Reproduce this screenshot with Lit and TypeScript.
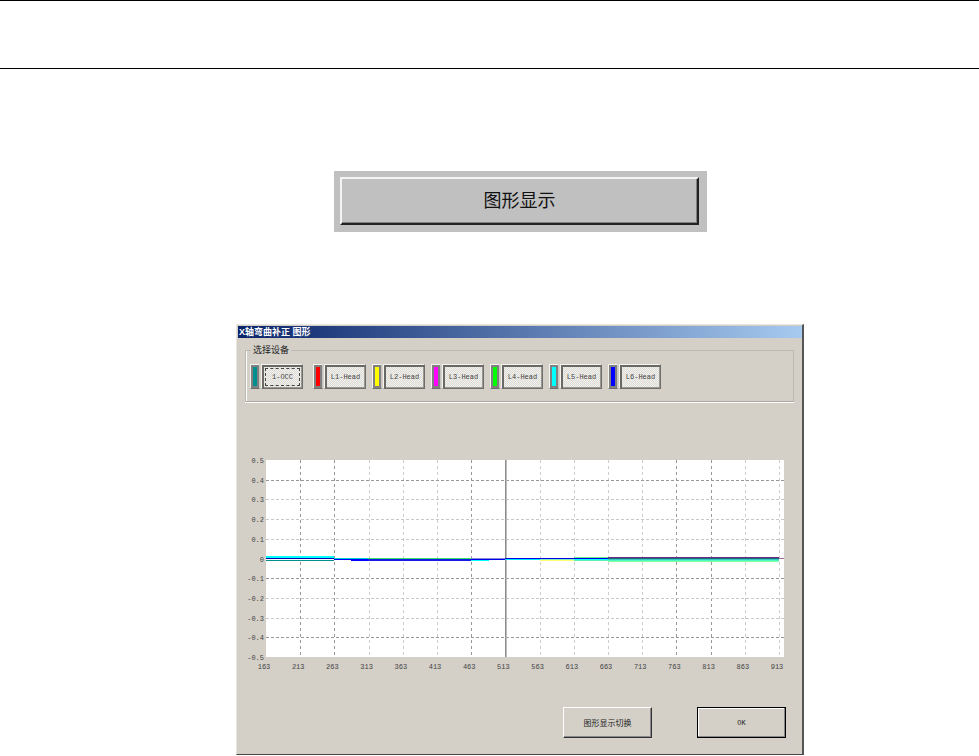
import { LitElement, html, css, svg } from "lit";
import { customElement } from "lit/decorators.js";

const SX = (i: number) => 266 + i * 34.2;
const YV = [0.5, 0.4, 0.3, 0.2, 0.1, 0, -0.1, -0.2, -0.3, -0.4, -0.5];
const XT = Array.from({ length: 16 }, (_, i) => 163 + i * 50);
const DARK_X = [1, 2, 6, 12, 13];
const DARK_Y = [1, 6, 9];
const DEVICES = [
  ["#008f8f", "1-OCC"], ["#ff0000", "L1-Head"], ["#ffff00", "L2-Head"], ["#ff00ff", "L3-Head"],
  ["#00ff00", "L4-Head"], ["#00ffff", "L5-Head"], ["#0000ff", "L6-Head"],
];
// x0, x1, y, colour, height
const SEGS: [number, number, number, string, number][] = [
  [266, 334, 556, "#00ffff", 2], [266, 334, 558, "#0000b0", 1], [266, 334, 560, "#008f8f", 1],
  [334, 368, 558, "#00d0d0", 1], [334, 351, 559, "#0000ff", 1], [351, 368, 559, "#0000ff", 2],
  [368, 471, 558, "#30e860", 1], [368, 471, 559, "#1818e8", 2],
  [471, 505, 558, "#8a8ae0", 1], [471, 505, 559, "#0000e8", 1], [471, 489, 560, "#00ffff", 1],
  [505, 608, 558, "#0000e0", 1], [505, 540, 559, "#00e8ff", 1], [540, 574, 559, "#80f0c0", 1], [540, 574, 560, "#ffff70", 1],
  [574, 608, 559, "#00ffff", 1], [574, 608, 560, "#60f0b0", 1],
  [574, 608, 557, "#70e890", 1],
  [608, 779, 557, "#6a2a80", 1], [608, 779, 558, "#206a80", 1], [608, 779, 559, "#30c8c0", 1], [608, 779, 560, "#50f8c0", 1], [608, 779, 561, "#80ffa0", 1],
];

@customElement("app-root")
export class AppRoot extends LitElement {
  static styles = css`
    :host { display: block; width: 979px; height: 756px; background: #fff; overflow: hidden;
      font-family: "Liberation Sans", "Noto Sans CJK SC", sans-serif; color: #000; box-sizing: border-box; }
    .rule { border-top: 1px solid #000; border-bottom: 1px solid #000; height: 67px; }
    .banner { margin: 102px 0 0 334px; width: 373px; height: 61px; background: #c0c0c0; padding: 6px 8px 7px 6px; box-sizing: border-box; }
    .banner-btn { height: 48px; box-sizing: border-box; background: #c0c0c0; padding-bottom: 5px;
      border-top: 2px solid #f4f4f4; border-left: 2px solid #f4f4f4; border-right: 2px solid #222; border-bottom: 2px solid #222;
      box-shadow: inset -1px -1px 0 #808080; display: flex; align-items: center; justify-content: center;
      font-size: 18px; color: #111; }
    .dialog { margin: 92px 0 0 236px; width: 568px; height: 431px; box-sizing: border-box; background: #d4d0c8;
      border-top: 1px solid #e8e6e0; border-left: 1px solid #e8e6e0; border-right: 2px solid #555; border-bottom: 1px solid #444;
      padding: 1px 0 0 1px; display: flex; flex-direction: column; }
    .title { height: 12px; background: linear-gradient(90deg, #0a246a, #a6caf0); color: #fff;
      font-size: 9px; font-weight: 700; line-height: 12px; padding-left: 1px; white-space: nowrap; }
    .group { position: relative; margin: 12px 8px 0 7px; height: 52px; box-sizing: border-box;
      border: 1px solid #bcb9b2; border-bottom: 1px solid #aaa7a0; box-shadow: 0 1px 0 #fff, inset 1px 0 0 #fff;
      padding: 13px 0 0 4px; display: flex; }
    .legend { position: absolute; left: 5px; top: -6px; padding: 0 2px; background: #d4d0c8; font-size: 9px; line-height: 11px; color: #222; }
    .dev { display: flex; gap: 1px; height: 25px; margin-right: 6px; }
    .dev.first { margin-right: 10px; }
    .swatch { width: 10px; box-sizing: border-box; background: #808080; padding: 2px;
      border-left: 1px solid #f4f3f0; border-top: 1px solid #f4f3f0; border-right: 1px solid #c8c6c0; border-bottom: 1px solid #6f6e6a; }
    .swatch i { display: block; height: 100%; width: 100%; }
    .name { width: 42px; box-sizing: border-box; display: flex; padding: 2px 1px 1px 2px; background: #f0efeb;
      border: 1px solid; border-color: #f4f3f0 #6f6e6a #6f6e6a #f4f3f0;
      box-shadow: inset 2px 2px 0 #6a6965, inset -1px -1px 0 #9a9892; }
    .name span { flex: 1; display: flex; align-items: center; justify-content: center; font-family: "Liberation Mono", monospace;
      font-size: 7px; color: #444; white-space: nowrap;
      background-color: #f2f1ee; background-image: repeating-conic-gradient(#dcdad4 0 25%, transparent 0 50%); background-size: 2px 2px; }
    .dev.first .name span { outline: 1px dashed #444; outline-offset: -2px; }
    .spacer { height: 48px; }
    .chart { display: block; }
    .actions { display: flex; margin: 25px 0 0 325px; gap: 45px; }
    .btn { height: 31px; width: 89px; box-sizing: border-box; display: flex; align-items: center; justify-content: center; background: #d4d0c8; color: #222; }
    .btn.switch { font-size: 8px; border: 1px solid; border-color: #fff #333 #333 #fff; box-shadow: inset -1px -1px 0 #888; }
    .btn.ok { font-size: 7px; font-family: "Liberation Mono", monospace; border: 1px solid #000; box-shadow: inset -1px -1px 0 #888, inset 1px 1px 0 #fff; }
    text { font-family: "Liberation Mono", monospace; font-size: 7px; fill: #444; }
  `;

  renderChart() {
    const ox = 238, oy = 450;
    return html`<svg class="chart" width="566" height="232" viewBox="${ox} ${oy} 566 232">
      <rect x="266" y="460" width="518" height="197" fill="#fff"></rect>
      ${XT.map((_, i) => (i === 0 || i === 7 ? "" : svg`<line x1=${Math.round(SX(i)) + 0.5} x2=${Math.round(SX(i)) + 0.5} y1="460" y2="657" stroke=${DARK_X.includes(i) ? "#989898" : "#cccccc"} stroke-dasharray="3 3"></line>`))}
      ${YV.map((v, i) => {
        const y = Math.round(460 + i * 19.7) + 0.5;
        return svg`${i > 0 && i < 10 && i !== 5 ? svg`<line x1="266" x2="784" y1=${y} y2=${y} stroke=${DARK_Y.includes(i) ? "#989898" : "#c8c8c8"} stroke-dasharray="3 2"></line>` : ""}
        <text x="264" y=${y + 2.5} text-anchor="end">${v === 0 ? "0" : v.toFixed(1)}</text>`;
      })}
      <rect x="505" y="460" width="1" height="197" fill="#8c8c8c"></rect>
      <rect x="506" y="460" width="1" height="197" fill="#bdbdbd"></rect>
      ${SEGS.map(([a, b, y, c, h]) => svg`<rect x=${a} y=${y} width=${b - a} height=${h} fill=${c}></rect>`)}
      <rect x="779" y="558" width="5" height="1" fill="#9a6a9a"></rect>
      ${XT.map((v, i) => svg`<text x=${SX(i) - 2} y="669" text-anchor="middle">${v}</text>`)}
    </svg>`;
  }

  render() {
    return html`
      <div class="rule"></div>
      <div class="banner"><div class="banner-btn">图形显示</div></div>
      <div class="dialog">
        <div class="title">X轴弯曲补正 图形</div>
        <div class="group">
          <div class="legend">选择设备</div>
          ${DEVICES.map(([c, n], i) => html`<div class="dev ${i === 0 ? "first" : ""}">
            <div class="swatch"><i style="background:${c}"></i></div>
            <div class="name"><span>${n}</span></div>
          </div>`)}
        </div>
        <div class="spacer"></div>
        ${this.renderChart()}
        <div class="actions">
          <div class="btn switch">图形显示切换</div>
          <div class="btn ok">OK</div>
        </div>
      </div>
    `;
  }
}
